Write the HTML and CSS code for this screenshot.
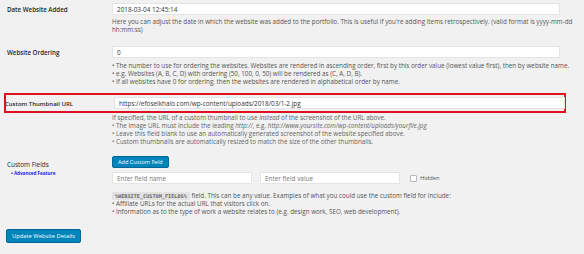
FILE: index.html
```html
<!DOCTYPE html>
<html lang="en">
<head>
    <meta charset="UTF-8">
    <title>Edit Website</title>
    <link rel="stylesheet" href="styles.css">
</head>
<body>

    <form class="details">

        <div class="row">
            <label class="label" for="dateAdded">Date Website Added</label>
            <div class="field">
                <input type="text" id="dateAdded" value="2018-03-04 12:45:14">
                <p class="desc">Here you can adjust the date in which the website was added to the portfolio. This is useful if you're adding items retrospectively. (valid format is yyyy-mm-dd hh:mm:ss)</p>
            </div>
        </div>

        <div class="row row-ordering">
            <label class="label" for="ordering">Website Ordering</label>
            <div class="field">
                <input type="text" id="ordering" value="0">
                <p class="desc bullets">&bull; The number to use for ordering the websites. Websites are rendered in ascending order, first by this order value (lowest value first), then by website name.<br>
                &bull; e.g. Websites (A, B, C, D) with ordering (50, 100, 0, 50) will be rendered as (C, A, D, B).<br>
                &bull; If all websites have 0 for ordering, then the websites are rendered in alphabetical order by name.</p>
            </div>
        </div>

        <div class="row-thumb">
            <div class="highlight">
                <label class="label" for="thumb">Custom Thumbnail URL</label>
                <div class="field">
                    <input type="text" id="thumb" value="https://efoseikhaio.com/wp-content/uploads/2018/03/1-2.jpg">
                </div>
            </div>
            <p class="desc thumb-desc">If specified, the URL of a custom thumbnail to use <em>instead</em> of the screenshot of the URL above.<br>
            &bull; The image URL must include the leading <em>http://</em>, e.g. <em>http://www.yoursite.com/wp-content/uploads/yourfile.jpg</em><br>
            &bull; Leave this field blank to use an automatically generated screenshot of the website specified above.<br>
            &bull; Custom thumbnails are automatically resized to match the size of the other thumbnails.</p>
        </div>

        <div class="row row-custom">
            <div class="label plain">
                Custom Fields
                <span class="advanced">&bull; Advanced Feature</span>
            </div>
            <div class="field">
                <button type="button" class="btn">Add Custom field</button>
                <div class="pair">
                    <input type="text" class="half" placeholder="Enter field name">
                    <input type="text" class="half" placeholder="Enter field value">
                    <label class="hidden-opt"><span class="box"></span>Hidden</label>
                </div>
                <p class="desc custom-desc"><code>%WEBSITE_CUSTOM_FIELDS%</code> field. This can be any value. Examples of what you could use the custom field for include:<br>
                &bull; Affiliate URLs for the actual URL that visitors click on.<br>
                &bull; Information as to the type of work a website relates to (e.g. design work, SEO, web development).</p>
            </div>
        </div>

        <button type="button" class="btn btn-update">Update Website Details</button>

    </form>

</body>
</html>
```

FILE: styles.css
```css
* {
    margin: 0;
    padding: 0;
    box-sizing: border-box;
}

body {
    background-color: #f1f1f1;
    font-family: "Open Sans", "Noto Sans", sans-serif;
    font-size: 6px;
    color: #444;
}

.details {
    padding: 3px 0 0 0;
}

.row {
    display: grid;
    grid-template-columns: 112px 464px;
}

.label {
    padding: 2px 0 0 7px;
    font-weight: 600;
    color: #23282d;
    font-size: 6.2px;
}

.label.plain {
    font-weight: 400;
    font-size: 6.4px;
    padding-top: 4px;
}

.advanced {
    display: block;
    margin: 1px 0 0 4px;
    color: #1a1ae8;
    font-size: 4.6px;
    font-weight: 700;
}

input[type="text"] {
    display: block;
    width: 448px;
    height: 12px;
    padding: 0 4px;
    border: 1px solid #e4e4e4;
    background-color: white;
    font-family: inherit;
    font-size: 6.4px;
    color: #333;
}

input::placeholder {
    color: #777;
}

.desc {
    margin-top: 3px;
    line-height: 8px;
    font-size: 6.3px;
    color: #555;
}

.desc.bullets {
    margin-top: 4px;
}

.row-ordering {
    margin-top: 12px;
}

.row-thumb {
    margin-top: 7px;
}

.highlight {
    display: grid;
    grid-template-columns: 108px 451px;
    margin-left: 4px;
    width: 562px;
    border: 2px solid #e0101e;
    padding: 2px 0;
}

.highlight .label {
    padding: 3px 0 0 0;
    font-size: 6px;
    margin-left: -1px;
}

.highlight input[type="text"] {
    width: 451px;
}

.thumb-desc {
    margin: 1px 0 0 112px;
    width: 464px;
    color: #666;
}

.row-custom {
    margin-top: 10px;
}

.btn {
    display: block;
    height: 12px;
    padding: 0 5px;
    border: 1px solid #006799;
    border-radius: 2px;
    background-color: #0085ba;
    color: white;
    font-family: inherit;
    font-size: 5.6px;
    cursor: pointer;
}

.pair {
    display: flex;
    align-items: center;
    gap: 8px;
    margin-top: 4px;
}

.pair .half {
    width: 140px;
}

.hidden-opt {
    display: flex;
    align-items: center;
    gap: 3px;
    margin-left: 2px;
    font-size: 5.8px;
    color: #555;
}

.box {
    width: 7px;
    height: 7px;
    border: 1px solid #b4b9be;
    border-radius: 1px;
    background-color: white;
}

.custom-desc {
    margin-top: 8px;
}

code {
    padding: 1px 3px;
    background-color: #e2e2e2;
    font-family: "DejaVu Sans Mono", monospace;
    font-size: 5.2px;
    font-weight: 700;
    color: #666;
}

.btn-update {
    margin: 13px 0 0 6px;
    height: 14px;
    font-size: 5.8px;
}
```
